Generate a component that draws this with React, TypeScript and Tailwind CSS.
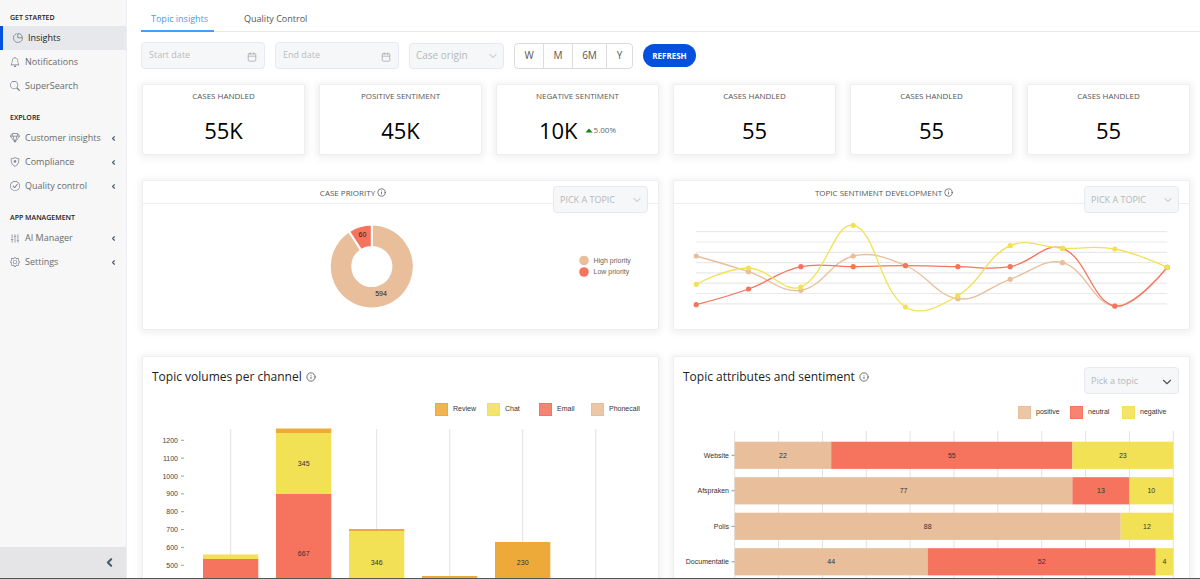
import type { ReactNode } from "react";
import { BsBell, BsCheckCircle, BsGear, BsGem, BsSearch } from "react-icons/bs";
import { Calendar, ChevronDown, ChevronLeft, Info, SlidersVertical } from "lucide-react";

const TAN = "#e8be9b";
const RED = "#f6735e";
const YELLOW = "#f2e155";
const ORANGE = "#eeaa38";
const SVG_FONT = "font-['Liberation_Sans',sans-serif] text-[7px]";

function PieIcon() {
  return (
    <svg viewBox="0 0 16 16" className="size-[10px]" fill="none" stroke="currentColor" strokeWidth="1.300">
      <path d="M5.800 1.300A7 7 0 1 0 14.900 7.200" />
      <path d="M7.600 1v6.600H14.800A7 7 0 0 0 7.600 1Z" />
    </svg>
  );
}

function ShieldIcon() {
  return (
    <svg viewBox="0 0 16 16" className="size-[10px]" fill="none" stroke="currentColor" strokeWidth="1.200">
      <path d="M8 .9c2 1.200 4 1.700 6.200 1.800 0 5.600-1 9.800-6.200 12.400C2.800 12.500 1.800 8.300 1.800 2.700 4 2.600 6 2.100 8 .9Z" />
      <circle cx="8" cy="7" r="1.500" fill="currentColor" />
    </svg>
  );
}

type NavItem = { label: string; icon: ReactNode; active?: boolean; sub?: boolean };

const NAV: { title: string; items: NavItem[] }[] = [
  {
    title: "GET STARTED",
    items: [
      { label: "Insights", icon: <PieIcon />, active: true },
      { label: "Notifications", icon: <BsBell className="size-[10px]" /> },
      { label: "SuperSearch", icon: <BsSearch className="size-[10px]" /> },
    ],
  },
  {
    title: "EXPLORE",
    items: [
      { label: "Customer insights", icon: <BsGem className="size-[10px]" />, sub: true },
      { label: "Compliance", icon: <ShieldIcon />, sub: true },
      { label: "Quality control", icon: <BsCheckCircle className="size-[10px]" />, sub: true },
    ],
  },
  {
    title: "APP MANAGEMENT",
    items: [
      { label: "AI Manager", icon: <SlidersVertical className="size-[11px]" strokeWidth={1.7} />, sub: true },
      { label: "Settings", icon: <BsGear className="size-[10px]" />, sub: true },
    ],
  },
];

function Sidebar() {
  return (
    <aside className="flex w-[127px] shrink-0 flex-col border-r border-[#ededf3] bg-[#f7f7f7]">
      <nav className="flex flex-1 flex-col gap-3 pt-[10px]">
        {NAV.map((group) => (
          <section key={group.title}>
            <h2 className="flex h-4 items-center pt-px pl-[10px] text-[7px] font-semibold text-[#222]">{group.title}</h2>
            <ul>
              {group.items.map((item) => (
                <li key={item.label}>
                  <a
                    href="#"
                    className={
                      item.active
                        ? "flex h-6 items-center gap-[5px] border-l-3 border-[#0550dc] bg-[#e6e8eb] pl-[10px] text-[9px] text-[#222]"
                        : "flex h-6 items-center gap-[5px] pr-[9px] pl-[10px] text-[9px] text-[#6b6b6b]"
                    }
                  >
                    <span className="flex w-[10px] shrink-0 justify-center text-[#747b88]">{item.icon}</span>
                    <span className="flex-1 whitespace-nowrap">{item.label}</span>
                    {item.sub && <ChevronLeft className="size-[7px] text-[#44576b]" strokeWidth={4} />}
                  </a>
                </li>
              ))}
            </ul>
          </section>
        ))}
      </nav>
      <button aria-label="Collapse menu" className="flex h-[31px] items-center justify-end bg-[#e5e5e8] pr-[10px] text-[#44606f]">
        <ChevronLeft className="size-[13px]" strokeWidth={4} />
      </button>
    </aside>
  );
}

function DateField({ label }: { label: string }) {
  return (
    <label className="flex h-[27px] w-[124px] items-center rounded-sm border border-[#e6e9f2] bg-[#f6f7f8] pr-[7px] pl-[7px]">
      <input
        type="text"
        aria-label={label}
        placeholder={label}
        className="w-full min-w-0 bg-transparent pb-px text-[9px] outline-none placeholder:text-[#b9bcc2]"
      />
      <Calendar className="mt-[2px] size-[10px] shrink-0 text-[#a9adb5]" strokeWidth={2} />
    </label>
  );
}

function Picker({ label, text, height, strong }: { label: string; text: string; height: string; strong?: boolean }) {
  return (
    <div className={`grid w-[95px] shrink-0 items-center rounded-sm border border-[#e6e9f2] bg-[#f6f7f8] ${height}`}>
      <select
        aria-label={label}
        className={`col-start-1 row-start-1 h-full w-full appearance-none bg-transparent pl-[6px] text-[#b4b7bd] outline-none ${text}`}
      >
        <option>{label}</option>
      </select>
      <ChevronDown
        className={
          strong
            ? "pointer-events-none col-start-1 row-start-1 mt-[2px] mr-[4px] size-[14px] justify-self-end text-[#555]"
            : "pointer-events-none col-start-1 row-start-1 mt-px mr-[4px] size-[12px] justify-self-end text-[#b4b7bd]"
        }
        strokeWidth={2}
      />
    </div>
  );
}

const CARD = "rounded-xs border border-[#eeeeee] bg-white shadow-[0_1px_6px_3px_rgba(0,0,0,0.05)]";

function Stat({ title, value, change }: { title: string; value: string; change?: string }) {
  return (
    <article className={`flex h-[71px] flex-col items-center ${CARD}`}>
      <h3 className="mt-[5px] text-[8px] leading-3 text-[#555]">{title}</h3>
      <p className="mt-[14px] flex items-center gap-[7px] text-[22px] leading-7 text-black">
        {value}
        {change && (
          <span className="flex items-center gap-px text-[8px] text-[#666]">
            <svg viewBox="0 0 8 5" className="h-[5px] w-[8px]">
              <path d="M4 .5 7.500 4.500H.5Z" fill="#108410" />
            </svg>
            {change}
          </span>
        )}
      </p>
    </article>
  );
}

function ChartHeader({ title }: { title: string }) {
  return (
    <header className="flex h-[23px] items-start border-b border-[#eeeeee] pr-[10px] pl-[10px]">
      <h3 className="flex h-full flex-1 items-center justify-center gap-[2px] pt-px text-[8px] text-[#555]">
        {title}
        <Info className="size-[9px]" strokeWidth={2} />
      </h3>
      <div className="pt-[5px]">
        <Picker label="PICK A TOPIC" text="text-[9px]" height="h-[27px]" />
      </div>
    </header>
  );
}

function CasePriority() {
  const angle = (-60 / 654) * 2 * Math.PI;
  const cx = 229.3;
  const cy = 62.5;
  const at = (r: number) => `${cx + r * Math.sin(angle)} ${cy - r * Math.cos(angle)}`;
  const outer = 42;
  const inner = 19.5;
  return (
    <section className={CARD}>
      <ChartHeader title="CASE PRIORITY" />
      <svg viewBox="0.5 0 515 125" className="block w-full">
        <g stroke="white" strokeWidth="2">
          <path
            fill={TAN}
            d={`M${cx} ${cy - outer}A${outer} ${outer} 0 1 1 ${at(outer)}L${at(inner)}A${inner} ${inner} 0 1 0 ${cx} ${cy - inner}Z`}
          />
          <path
            fill={RED}
            d={`M${at(outer)}A${outer} ${outer} 0 0 1 ${cx} ${cy - outer}V${cy - inner}A${inner} ${inner} 0 0 0 ${at(inner)}Z`}
          />
        </g>
        <g className={SVG_FONT} fill="#222" textAnchor="middle">
          <text x="220" y="33">60</text>
          <text x="238.500" y="92">594</text>
        </g>
        <circle cx="441.500" cy="56.500" r="4.800" fill={TAN} />
        <circle cx="441.500" cy="68" r="4.800" fill={RED} />
        <g className={SVG_FONT} fill="#666">
          <text x="451" y="58.500">High priority</text>
          <text x="451" y="70">Low priority</text>
        </g>
      </svg>
    </section>
  );
}

const SERIES = [
  { color: TAN, y: [52, 67.7, 86.3, 52, 61.5, 94.7, 75.3, 58.7, 102, 63.3] },
  { color: RED, y: [100.7, 85, 62.7, 62.7, 61.7, 62.7, 62.7, 44.3, 102, 63.3] },
  { color: YELLOW, y: [80.3, 64, 83, 21.3, 103, 91.7, 41.7, 44.3, 45, 63.3] },
];
const pointX = (i: number) => 22.7 + i * 52.33;

/* Cardinal spline whose handles shrink with the distance to each neighbour. */
function spline(ys: number[], tension = 0.4) {
  const pts = ys.map((y, i) => ({ x: pointX(i), y }));
  const handles = pts.map((p, i) => {
    const a = pts[i - 1] ?? p;
    const b = pts[i + 1] ?? p;
    const d1 = Math.hypot(p.x - a.x, p.y - a.y);
    const d2 = Math.hypot(b.x - p.x, b.y - p.y);
    const fa = (tension * d1) / (d1 + d2);
    const fb = (tension * d2) / (d1 + d2);
    const end = i === 0 || i === pts.length - 1;
    const dx = end ? 0 : b.x - a.x;
    const dy = end ? 0 : b.y - a.y;
    return { in: [p.x - fa * dx, p.y - fa * dy], out: [p.x + fb * dx, p.y + fb * dy] };
  });
  return pts
    .map((p, i) => (i === 0 ? `M${p.x} ${p.y}` : `C${handles[i - 1].out} ${handles[i].in} ${p.x} ${p.y}`))
    .join("");
}

function SentimentDevelopment() {
  return (
    <section className={CARD}>
      <ChartHeader title="TOPIC SENTIMENT DEVELOPMENT" />
      <svg viewBox="0.5 0 515 125" className="block w-full">
        {Array.from({ length: 8 }, (_, i) => (
          <line key={i} x1="22.700" x2="493.700" y1={27.7 + i * 10.3} y2={27.7 + i * 10.3} stroke="#e9e9e9" strokeWidth="1.200" />
        ))}
        {SERIES.map((s) => (
          <g key={s.color}>
            <path d={spline(s.y)} fill="none" stroke={s.color} strokeWidth="1.300" />
            {s.y.map((y, i) => (
              <circle key={i} cx={pointX(i)} cy={y} r="2.600" fill={s.color} />
            ))}
          </g>
        ))}
      </svg>
    </section>
  );
}

function Legend({ items }: { items: [string, string][] }) {
  return (
    <ul className="flex h-[25px] items-center justify-end pr-[15px] font-['Liberation_Sans',sans-serif] text-[7px] text-[#333]">
      {items.map(([label, color]) => (
        <li key={label} className="flex w-[52px] items-center gap-[5px]">
          <svg viewBox="0 0 13 13" className="size-[13px] shrink-0">
            <rect x=".5" y=".5" width="12" height="12" fill={color} fillOpacity=".88" stroke={color} />
          </svg>
          {label}
        </li>
      ))}
    </ul>
  );
}

type Segment = { color: string; top: number; bottom: number; value?: number; labelY?: number };
const COLUMNS: Segment[][] = [
  [
    { color: YELLOW, top: 132.5, bottom: 137 },
    { color: RED, top: 137, bottom: 190 },
  ],
  [
    { color: ORANGE, top: 6.5, bottom: 11 },
    { color: YELLOW, top: 11, bottom: 72, value: 345, labelY: 44 },
    { color: RED, top: 72, bottom: 190, value: 667, labelY: 134 },
  ],
  [
    { color: ORANGE, top: 107, bottom: 109.5 },
    { color: YELLOW, top: 109.5, bottom: 171, value: 346, labelY: 143 },
    { color: RED, top: 171, bottom: 190 },
  ],
  [{ color: ORANGE, top: 154, bottom: 190 }],
  [{ color: ORANGE, top: 120, bottom: 161, value: 230, labelY: 143 }],
  [],
];

function VolumesChart() {
  return (
    <section className={CARD}>
      <h3 className="flex h-10 items-center gap-1 pl-[9px] text-[12px] text-[#222]">
        Topic volumes per channel
        <Info className="size-[10px] text-[#555]" strokeWidth={2} />
      </h3>
      <Legend items={[["Review", ORANGE], ["Chat", YELLOW], ["Email", RED], ["Phonecall", TAN]]} />
      <svg viewBox="0.5 0 515 190" className={`block w-full ${SVG_FONT}`}>
        {Array.from({ length: 8 }, (_, i) => (
          <g key={i}>
            <text x="35.500" y={20.8 + i * 17.85} fill="#444" textAnchor="end">
              {1200 - i * 100}
            </text>
            <line x1="38.500" x2="41.500" y1={18.3 + i * 17.85} y2={18.3 + i * 17.85} stroke="#888" strokeWidth=".8" />
          </g>
        ))}
        {COLUMNS.map((segments, i) => (
          <g key={i}>
            <line x1={88.2 + i * 73} x2={88.2 + i * 73} y1="7" y2="190" stroke="#e6e6e6" strokeWidth="1.200" />
            {segments.map((s) => (
              <g key={s.color}>
                <rect x={60.5 + i * 73} y={s.top} width="55.300" height={s.bottom - s.top} fill={s.color} />
                {s.value && (
                  <text x={88.2 + i * 73} y={s.labelY} fill="#333" textAnchor="middle">
                    {s.value}
                  </text>
                )}
              </g>
            ))}
          </g>
        ))}
      </svg>
    </section>
  );
}

const ATTRIBUTES: { name: string; values: [number, number, number] }[] = [
  { name: "Website", values: [22, 55, 23] },
  { name: "Afspraken", values: [77, 13, 10] },
  { name: "Polis", values: [88, 0, 12] },
  { name: "Documentatie", values: [44, 52, 4] },
];

function AttributesChart() {
  const x0 = 61.2;
  const unit = 4.386;
  const colors = [TAN, RED, YELLOW];
  return (
    <section className={CARD}>
      <header className="flex h-[43px] items-start pr-[10px]">
        <h3 className="flex h-10 flex-1 items-center gap-1 pl-[9px] text-[12px] text-[#222]">
          Topic attributes and sentiment
          <Info className="size-[10px] text-[#555]" strokeWidth={2} />
        </h3>
        <div className="pt-[10px]">
          <Picker label="Pick a topic" text="text-[9px]" height="h-[27px]" strong />
        </div>
      </header>
      <Legend items={[["positive", TAN], ["neutral", RED], ["negative", YELLOW]]} />
      <svg viewBox="0.5 0 515 190" className={`block w-full ${SVG_FONT}`}>
        {Array.from({ length: 11 }, (_, i) => (
          <line key={i} x1={x0 + i * 43.86} x2={x0 + i * 43.86} y1="6" y2="190" stroke="#e2e2e2" strokeWidth="1" />
        ))}
        {ATTRIBUTES.map((row, r) => {
          const y = 16.7 + r * 35.5;
          return (
            <g key={row.name}>
              <text x="55.500" y={y + 16.2} fill="#333" textAnchor="end">
                {row.name}
              </text>
              <line x1="58" x2={x0} y1={y + 13.6} y2={y + 13.6} stroke="#777" strokeWidth=".8" />
              {row.values.map((v, c) => {
                const start = row.values.slice(0, c).reduce((a, b) => a + b, 0);
                return v > 0 ? (
                  <g key={c}>
                    <rect x={x0 + start * unit} y={y} width={v * unit} height="27.200" fill={colors[c]} />
                    <text x={x0 + (start + v / 2) * unit} y={y + 16.2} fill="#333" textAnchor="middle">
                      {v}
                    </text>
                  </g>
                ) : null;
              })}
            </g>
          );
        })}
      </svg>
    </section>
  );
}

export default function App() {
  return (
    <div className="flex h-screen overflow-hidden border-b border-[#555] bg-white font-['Open_Sans','Noto_Sans',sans-serif]">
      <Sidebar />
      <main className="flex min-w-0 flex-1 flex-col overflow-hidden">
        <nav className="ml-[14px] flex h-8 shrink-0 gap-[20px] border-b border-[#e8e8ec] text-[9px]">
          <a href="#" className="-mb-px flex items-center border-b-2 border-[#409eff] pt-[7px] pr-[6px] pl-[10px] text-[#409eff]">
            Topic insights
          </a>
          <a href="#" className="flex items-center px-[10px] pt-[6px] text-[#555]">
            Quality Control
          </a>
        </nav>
        <div className="flex flex-col pr-[10px] pl-[15px]">
          <div className="mt-[10px] -ml-px flex h-[27px] items-center gap-[10px]">
            <DateField label="Start date" />
            <DateField label="End date" />
            <Picker label="Case origin" text="text-[10px]" height="h-[26px]" />
            <div className="flex h-[26px] divide-x divide-[#dcdcdc] rounded-sm border border-[#dcdcdc] text-[10px] text-[#555]">
              <button className="w-[29px]">W</button>
              <button className="w-[29px]">M</button>
              <button className="w-[34px]">6M</button>
              <button className="w-[25px]">Y</button>
            </div>
            <button className="h-[23px] w-[53px] rounded-full bg-[#0550dc] text-[8px] font-bold text-white">REFRESH</button>
          </div>
          <div className="mt-[15px] grid grid-cols-6 gap-[14px]">
            <Stat title="CASES HANDLED" value="55K" />
            <Stat title="POSITIVE SENTIMENT" value="45K" />
            <Stat title="NEGATIVE SENTIMENT" value="10K" change="5.00%" />
            <Stat title="CASES HANDLED" value="55" />
            <Stat title="CASES HANDLED" value="55" />
            <Stat title="CASES HANDLED" value="55" />
          </div>
          <div className="mt-[25px] grid grid-cols-2 gap-[14px]">
            <CasePriority />
            <SentimentDevelopment />
          </div>
          <div className="mt-[26px] grid grid-cols-2 gap-[14px]">
            <VolumesChart />
            <AttributesChart />
          </div>
        </div>
      </main>
    </div>
  );
}
